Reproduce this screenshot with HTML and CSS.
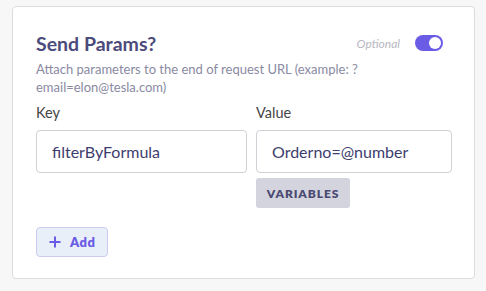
FILE: index.html
```html
<!DOCTYPE html>
<html>
<head>
<meta charset="utf-8">
<link rel="stylesheet" href="styles.css">
</head>
<body>
<div class="card">
  <div class="head">
    <h2 class="title">Send Params?</h2>
    <div class="opt">
      <span class="optional">Optional</span>
      <span class="toggle"><span class="knob"></span></span>
    </div>
  </div>
  <p class="desc">Attach parameters to the end of request URL (example: ?<br>email=elon@tesla.com)</p>
  <div class="grid">
    <div class="field">
      <label class="label">Key</label>
      <div class="input">filterByFormula</div>
    </div>
    <div class="field">
      <label class="label">Value</label>
      <div class="input">Orderno=@number</div>
      <span class="vars">VARIABLES</span>
    </div>
  </div>
  <button class="add"><svg width="12" height="12" viewBox="0 0 12 12"><path d="M6 0.5V11.5M0.5 6H11.5" stroke="currentColor" stroke-width="2"/></svg><span>Add</span></button>
</div>
</body>
</html>
```
FILE: styles.css
```css
* { box-sizing: border-box; }
html, body { margin: 0; padding: 0; }
body {
  background: #f7f7f7;
  font-family: Lato, "Open Sans", sans-serif;
  padding: 6px 11px 12px 12px;
}
.card {
  background: #fff;
  border: 1px solid #dcdcdc;
  border-radius: 4px;
  height: 273px;
  padding: 23px 23px 0 23px;
}
.head {
  display: flex;
  justify-content: space-between;
  align-items: center;
  height: 26px;
}
.title {
  margin: 0;
  font-size: 19.5px;
  font-weight: 700;
  color: #4b4b7c;
}
.opt { display: flex; align-items: center; gap: 15px; padding-right: 8px; }
.optional {
  font-style: italic;
  font-size: 12px;
  color: #b8b8c4;
}
.toggle {
  width: 28px; height: 16px;
  border-radius: 8px;
  background: #6b5ce6;
  display: flex; align-items: center; justify-content: flex-end;
  padding: 2px;
}
.knob { width: 12px; height: 12px; border-radius: 50%; background: #fff; }
.desc {
  margin: 4px 0 0 0;
  font-size: 13px;
  line-height: 18px;
  color: #8a8aa2;
}
.grid {
  display: grid;
  grid-template-columns: 211px 196px;
  column-gap: 9px;
  margin-top: 8px;
}
.field { display: flex; flex-direction: column; align-items: flex-start; }
.label { font-size: 14.5px; color: #444; line-height: 18px; margin-bottom: 8px; }
.input {
  width: 100%;
  height: 43px;
  border: 1px solid #d0d0d6;
  border-radius: 4px;
  padding: 0 15px;
  display: flex; align-items: center;
  font-size: 16px;
  color: #3d3d6e;
}
.vars {
  margin-top: 5px;
  background: #d4d4de;
  color: #4a4a72;
  font-size: 12px;
  font-weight: 800;
  letter-spacing: 0.9px;
  border-radius: 3px;
  width: 94px; height: 30px;
  display: flex; align-items: center; justify-content: center;
}
.add {
  margin-top: 19px;
  width: 72px; height: 30px;
  border: 1px solid #cbcaf0;
  background: #e9eff9;
  border-radius: 4px;
  color: #6b5ce6;
  font-family: inherit;
  font-weight: 800;
  font-size: 13px;
  display: flex; align-items: center; gap: 9px;
  padding: 0 0 0 12px;
  letter-spacing: 0.4px;
}
```
